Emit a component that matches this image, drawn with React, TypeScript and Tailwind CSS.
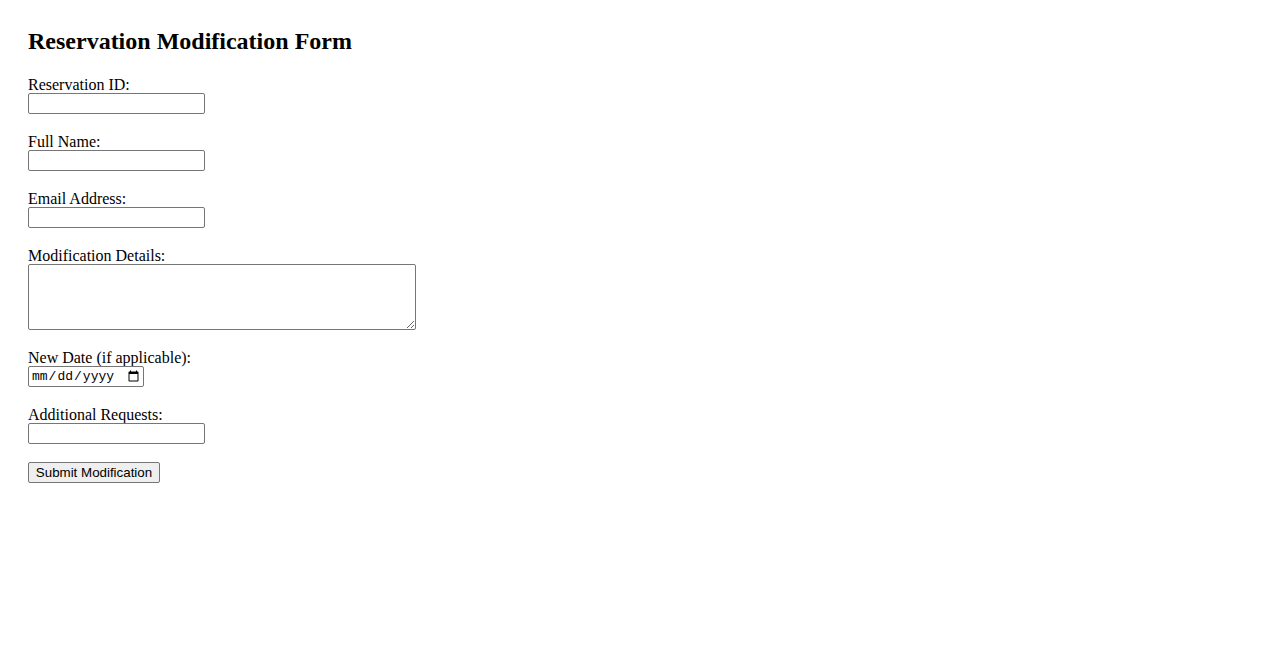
import React from 'react';

const fields = [
  { id: 'reservationId', label: 'Reservation ID:', kind: 'text' },
  { id: 'fullName', label: 'Full Name:', kind: 'text' },
  { id: 'email', label: 'Email Address:', kind: 'email' },
  { id: 'details', label: 'Modification Details:', kind: 'textarea' },
  { id: 'newDate', label: 'New Date (if applicable):', kind: 'date' },
  { id: 'requests', label: 'Additional Requests:', kind: 'text' },
];

export default function App() {
  return (
    <div className="min-h-screen bg-white pt-[28px] pl-[28px] text-black font-['Liberation_Serif',serif]">
      <h2 className="text-[24px] font-bold leading-[27px] mb-[21px]">Reservation Modification Form</h2>
      <form className="flex flex-col items-start" onSubmit={(e) => e.preventDefault()}>
        {fields.map((f, i) => (
          <div
            key={f.id}
            className={`flex flex-col items-start ${i === fields.length - 1 ? 'mb-[18px]' : 'mb-[19px]'}`}
          >
            <label htmlFor={f.id} className="block text-[16px] leading-[17px]">
              {f.label}
            </label>
            {f.kind === 'textarea' ? (
              <textarea
                id={f.id}
                className="block w-[388px] h-[66px] border border-[#767676] rounded-[2px] px-[2px] py-[2px] text-[13px] font-['Liberation_Mono',monospace] bg-white"
              />
            ) : f.kind === 'date' ? (
              <input
                id={f.id}
                type="date"
                className="block w-[116px] h-[21px] border border-[#767676] rounded-[2px] pl-[2px] pr-[1px] text-[13px] font-['Liberation_Mono',monospace] bg-white"
              />
            ) : (
              <input
                id={f.id}
                type={f.kind}
                className="block w-[177px] h-[21px] border border-[#767676] rounded-[2px] px-[2px] text-[13px] font-['Liberation_Sans',sans-serif] bg-white"
              />
            )}
          </div>
        ))}
        <button
          type="submit"
          className="h-[21px] w-[132px] bg-[#efefef] border border-[#767676] rounded-[2px] text-[13.33px] leading-[19px] font-['Liberation_Sans',sans-serif] text-black"
        >
          Submit Modification
        </button>
      </form>
    </div>
  );
}
